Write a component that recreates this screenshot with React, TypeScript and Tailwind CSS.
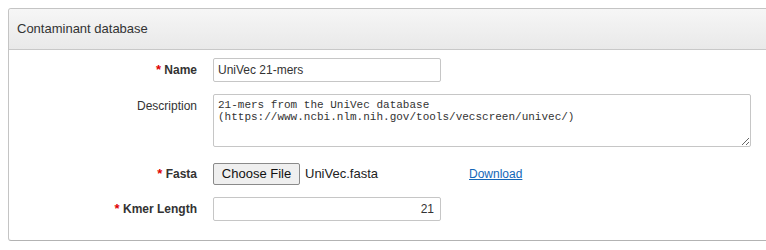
const labelCls =
  "w-[188px] shrink-0 pr-0 text-right text-[12px] text-[#333] mr-[16px]";

const Req = ({ children }: { children: React.ReactNode }) => (
  <span className="font-bold">
    <span className="text-[#e00000] text-[13px]">*</span> {children}
  </span>
);

import React from "react";

export default function App() {
  return (
    <div className="w-[766px] h-[250px] overflow-hidden bg-white font-['Liberation_Sans',Arial,sans-serif]">
      <div className="ml-[8px] mt-[8px] w-[800px] rounded-[3px] border border-[#c4c4c4] border-b-[#b3b3b3]">
        {/* Panel heading */}
        <div className="h-[41px] flex items-center pl-[8px] border-b border-[#c8c8c8] bg-gradient-to-b from-[#f6f6f6] to-[#e9e9e9] rounded-t-[3px]">
          <span className="text-[13px] text-[#333]">Contaminant database</span>
        </div>

        {/* Form */}
        <div className="pt-[8px] pb-[19px] flex flex-col">
          <div className="flex items-center h-[24px]">
            <label className={labelCls}>
              <Req>Name</Req>
            </label>
            <input
              defaultValue="UniVec 21-mers"
              className="w-[228px] h-[24px] border border-[#c6c6c6] rounded-[2px] px-[4px] text-[12px] text-[#333] outline-none"
            />
          </div>

          <div className="flex items-start mt-[12px]">
            <label className={labelCls + " pt-[3px]"}>Description</label>
            <textarea
              defaultValue={
                "21-mers from the UniVec database\n(https://www.ncbi.nlm.nih.gov/tools/vecscreen/univec/)"
              }
              className="w-[538px] h-[53px] border border-[#c6c6c6] rounded-[2px] px-[4px] pt-[4px] text-[11px] leading-[12px] text-[#333] outline-none font-['Liberation_Mono',monospace]"
            />
          </div>

          <div className="flex items-center h-[25px] mt-[14px]">
            <label className={labelCls}>
              <Req>Fasta</Req>
            </label>
            <div className="w-[256px] flex items-center">
              <button className="w-[87px] h-[22px] border border-[#8a8a8a] rounded-[2px] bg-[#efefef] text-[13px] text-[#111]">
                Choose File
              </button>
              <span className="ml-[5px] text-[13px] text-[#222]">UniVec.fasta</span>
            </div>
            <a className="text-[12px] text-[#1467b8] underline">Download</a>
          </div>

          <div className="flex items-center h-[24px] mt-[11px]">
            <label className={labelCls}>
              <Req>Kmer Length</Req>
            </label>
            <input
              defaultValue="21"
              className="w-[228px] h-[24px] border border-[#c6c6c6] rounded-[2px] px-[6px] text-right text-[12px] text-[#333] outline-none"
            />
          </div>
        </div>
      </div>
    </div>
  );
}
